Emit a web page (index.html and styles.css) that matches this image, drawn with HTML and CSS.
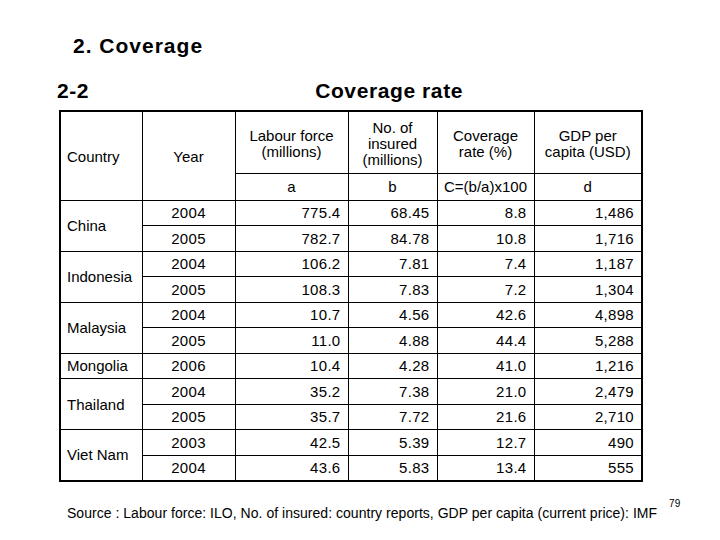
FILE: index.html
```html
<!DOCTYPE html>
<html>
<head>
<meta charset="utf-8">
<link rel="stylesheet" href="styles.css">
</head>
<body>
<div class="page">
  <h1 class="title">2. Coverage</h1>
  <div class="subhead">
    <span class="num">2-2</span>
    <span class="name">Coverage rate</span>
  </div>
  <table class="data">
    <colgroup>
      <col class="c-country"><col class="c-year"><col class="c-lab"><col class="c-ins"><col class="c-cov"><col class="c-gdp">
    </colgroup>
    <thead>
      <tr class="h1">
        <th rowspan="2" class="left">Country</th>
        <th rowspan="2">Year</th>
        <th>Labour force<br>(millions)</th>
        <th>No. of<br>insured<br>(millions)</th>
        <th>Coverage<br>rate (%)</th>
        <th>GDP per<br>capita (USD)</th>
      </tr>
      <tr class="h2">
        <th>a</th><th>b</th><th>C=(b/a)x100</th><th>d</th>
      </tr>
    </thead>
    <tbody>
      <tr><td rowspan="2" class="country">China</td><td class="yr">2004</td><td>775.4</td><td>68.45</td><td>8.8</td><td>1,486</td></tr>
      <tr><td class="yr">2005</td><td>782.7</td><td>84.78</td><td>10.8</td><td>1,716</td></tr>
      <tr><td rowspan="2" class="country">Indonesia</td><td class="yr">2004</td><td>106.2</td><td>7.81</td><td>7.4</td><td>1,187</td></tr>
      <tr><td class="yr">2005</td><td>108.3</td><td>7.83</td><td>7.2</td><td>1,304</td></tr>
      <tr><td rowspan="2" class="country">Malaysia</td><td class="yr">2004</td><td>10.7</td><td>4.56</td><td>42.6</td><td>4,898</td></tr>
      <tr><td class="yr">2005</td><td>11.0</td><td>4.88</td><td>44.4</td><td>5,288</td></tr>
      <tr><td class="country">Mongolia</td><td class="yr">2006</td><td>10.4</td><td>4.28</td><td>41.0</td><td>1,216</td></tr>
      <tr><td rowspan="2" class="country">Thailand</td><td class="yr">2004</td><td>35.2</td><td>7.38</td><td>21.0</td><td>2,479</td></tr>
      <tr><td class="yr">2005</td><td>35.7</td><td>7.72</td><td>21.6</td><td>2,710</td></tr>
      <tr><td rowspan="2" class="country">Viet Nam</td><td class="yr">2003</td><td>42.5</td><td>5.39</td><td>12.7</td><td>490</td></tr>
      <tr><td class="yr">2004</td><td>43.6</td><td>5.83</td><td>13.4</td><td>555</td></tr>
    </tbody>
  </table>
  <div class="footer">
    <span class="source">Source : Labour force: ILO, No. of insured: country reports, GDP per capita (current price): IMF</span>
    <span class="pageno">79</span>
  </div>
</div>
</body>
</html>
```
FILE: styles.css
```css
html, body {
  margin: 0;
  padding: 0;
  background: #fff;
}
body {
  font-family: "Liberation Sans", Arial, sans-serif;
  color: #000;
  width: 720px;
  height: 540px;
  overflow: hidden;
}
.page {
  padding-top: 34px;
}
.title {
  margin: 0 0 0 73px;
  font-size: 21px;
  line-height: 24px;
  font-weight: bold;
  letter-spacing: 1px;
}
.subhead {
  display: flex;
  margin-top: 21px;
  padding-left: 57px;
  font-size: 21px;
  line-height: 24px;
  font-weight: bold;
  letter-spacing: 0.6px;
}
.subhead .name {
  margin-left: 226px;
}
.data {
  margin-top: 7px;
  margin-left: 59px;
  border-collapse: collapse;
  table-layout: fixed;
  width: 584px;
  border: 2px solid #000;
  font-size: 15px;
}
.c-country { width: 82px; }
.c-year { width: 93px; }
.c-lab { width: 113px; }
.c-ins { width: 89px; }
.c-cov { width: 97px; }
.c-gdp { width: 108px; }
.data th, .data td {
  border: 1px solid #000;
  padding: 0 7px 0 5px;
  vertical-align: middle;
}
.data th {
  font-weight: normal;
  text-align: center;
  line-height: 16px;
  padding: 0 2px;
}
.data th.left {
  text-align: left;
  padding-left: 6px;
}
.h1 { height: 62px; }
.h1 th { padding-top: 3px; }
.h2 { height: 27px; }
.h2 th { line-height: 17px; }
.data tbody tr { height: 25.5px; }
.data td {
  text-align: right;
  line-height: 17px;
  letter-spacing: 0.3px;
}
.data td.country {
  text-align: left;
  padding-left: 6px;
  letter-spacing: 0;
}
.data td.yr {
  text-align: center;
  padding: 0;
}
.footer {
  display: flex;
  align-items: flex-start;
  margin-top: 23px;
  padding-left: 67px;
}
.source {
  font-size: 14px;
  line-height: 16px;
  letter-spacing: 0.03px;
}
.pageno {
  font-size: 10px;
  line-height: 12px;
  margin-top: -7px;
  margin-left: 12px;
}
```
